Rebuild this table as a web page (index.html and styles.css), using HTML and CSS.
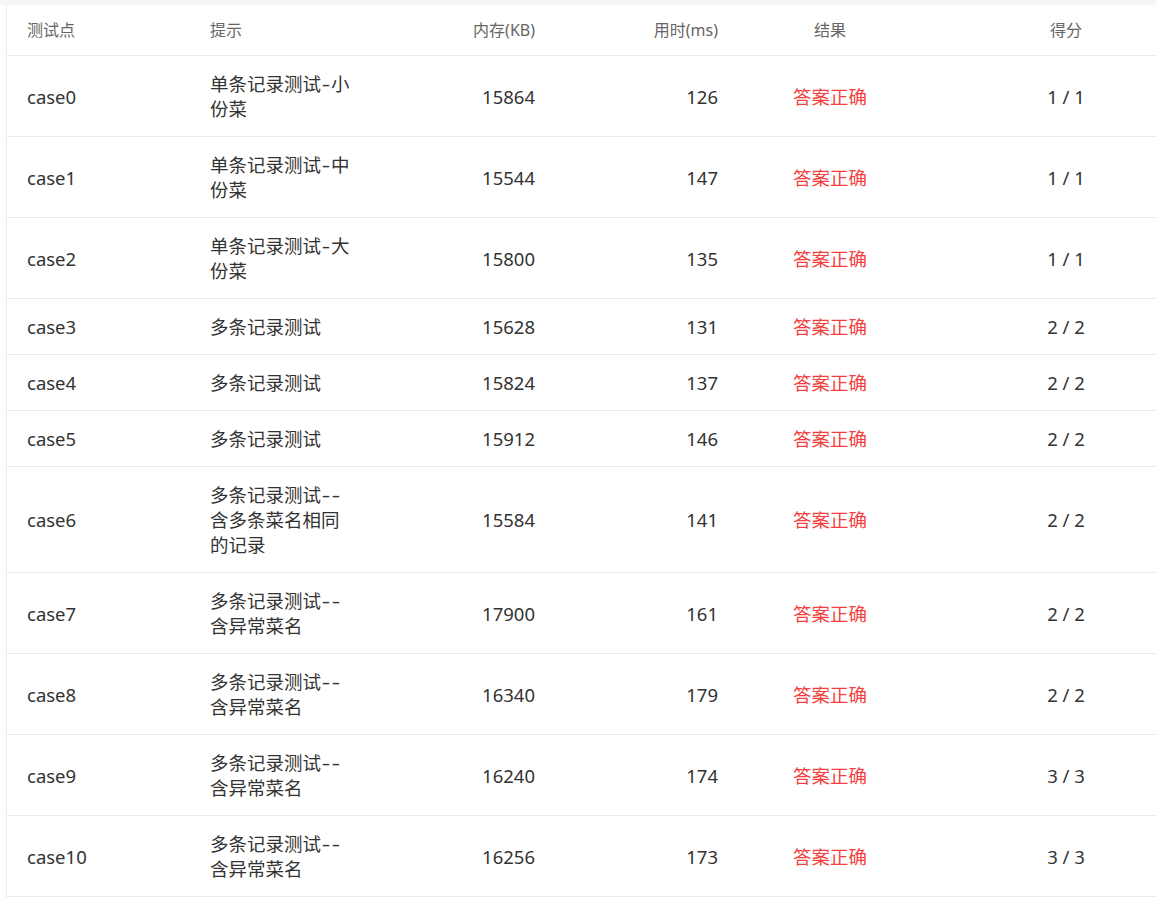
FILE: index.html
```html
<!DOCTYPE html>
<html lang="zh-CN">
<head>
<meta charset="utf-8">
<title>测试点</title>
<link rel="stylesheet" href="styles.css">
</head>
<body>
<div class="page">
  <div class="table-wrap">
    <table class="result-table">
      <colgroup>
        <col class="c-case"><col class="c-hint"><col class="c-mem"><col class="c-time"><col class="c-res"><col class="c-score">
      </colgroup>
      <thead>
        <tr>
          <th class="left">测试点</th>
          <th class="left">提示</th>
          <th class="right">内存(KB)</th>
          <th class="right">用时(ms)</th>
          <th class="center">结果</th>
          <th class="center">得分</th>
        </tr>
      </thead>
      <tbody>
        <tr><td>case0</td><td class="hint">单条记录测试<span class="dash">-</span>小份菜</td><td class="right">15864</td><td class="right">126</td><td class="center ok">答案正确</td><td class="center">1 / 1</td></tr>
        <tr><td>case1</td><td class="hint">单条记录测试<span class="dash">-</span>中份菜</td><td class="right">15544</td><td class="right">147</td><td class="center ok">答案正确</td><td class="center">1 / 1</td></tr>
        <tr><td>case2</td><td class="hint">单条记录测试<span class="dash">-</span>大份菜</td><td class="right">15800</td><td class="right">135</td><td class="center ok">答案正确</td><td class="center">1 / 1</td></tr>
        <tr><td>case3</td><td class="hint">多条记录测试</td><td class="right">15628</td><td class="right">131</td><td class="center ok">答案正确</td><td class="center">2 / 2</td></tr>
        <tr><td>case4</td><td class="hint">多条记录测试</td><td class="right">15824</td><td class="right">137</td><td class="center ok">答案正确</td><td class="center">2 / 2</td></tr>
        <tr><td>case5</td><td class="hint">多条记录测试</td><td class="right">15912</td><td class="right">146</td><td class="center ok">答案正确</td><td class="center">2 / 2</td></tr>
        <tr><td>case6</td><td class="hint">多条记录测试<span class="dash">-</span><span class="dash">-</span>含多条菜名相同的记录</td><td class="right">15584</td><td class="right">141</td><td class="center ok">答案正确</td><td class="center">2 / 2</td></tr>
        <tr><td>case7</td><td class="hint">多条记录测试<span class="dash">-</span><span class="dash">-</span>含异常菜名</td><td class="right">17900</td><td class="right">161</td><td class="center ok">答案正确</td><td class="center">2 / 2</td></tr>
        <tr><td>case8</td><td class="hint">多条记录测试<span class="dash">-</span><span class="dash">-</span>含异常菜名</td><td class="right">16340</td><td class="right">179</td><td class="center ok">答案正确</td><td class="center">2 / 2</td></tr>
        <tr><td>case9</td><td class="hint">多条记录测试<span class="dash">-</span><span class="dash">-</span>含异常菜名</td><td class="right">16240</td><td class="right">174</td><td class="center ok">答案正确</td><td class="center">3 / 3</td></tr>
        <tr><td>case10</td><td class="hint">多条记录测试<span class="dash">-</span><span class="dash">-</span>含异常菜名</td><td class="right">16256</td><td class="right">173</td><td class="center ok">答案正确</td><td class="center">3 / 3</td></tr>
      </tbody>
    </table>
  </div>
</div>
</body>
</html>
```
FILE: styles.css
```css
html, body {
  margin: 0;
  padding: 0;
  background: #fff;
  overflow: hidden;
}
body {
  font-family: "Noto Sans", "Noto Sans CJK SC", sans-serif;
  color: #333;
}
.page {
  border-top: 5px solid #f5f6f8;
}
.table-wrap {
  margin-left: 6px;
  border-left: 1px solid #ebebeb;
  width: 1203px;
}
.result-table {
  border-collapse: collapse;
  table-layout: fixed;
  width: 1203px;
}
.c-case { width: 183px; }
.c-hint { width: 184px; }
.c-mem { width: 181px; }
.c-time { width: 183px; }
.c-res { width: 184px; }
.c-score { width: 288px; }
th, td {
  padding: 15px 20px;
  border-bottom: 1px solid #ebebeb;
  text-align: left;
  vertical-align: middle;
}
th {
  font-weight: normal;
  font-size: 16px;
  line-height: 20px;
  color: #666;
}
td {
  font-size: 18.5px;
  line-height: 25px;
  color: #333;
}
.hint { word-break: break-all; }
.dash {
  display: inline-block;
  width: 10px;
  text-align: center;
  transform: scaleX(1.4);
}
.right { text-align: right; }
.center { text-align: center; }
.ok { color: #f53f3f; }
```
